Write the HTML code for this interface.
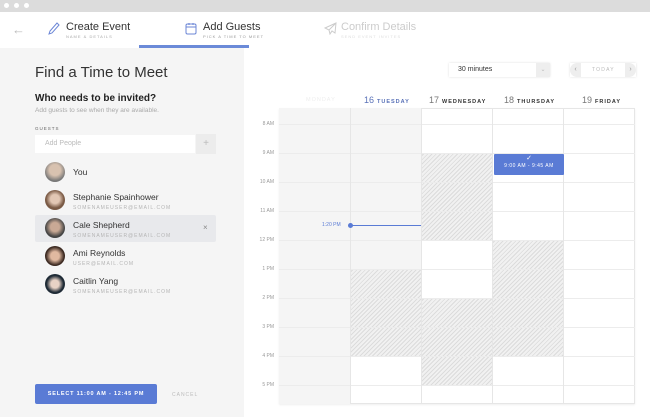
<!DOCTYPE html>
<html><head><meta charset="utf-8"><style>
*{margin:0;padding:0;box-sizing:border-box}
body{width:650px;height:417px;overflow:hidden;font-family:"Liberation Sans",sans-serif;background:#fff;position:relative}
.a{position:absolute}
.tiny{font-size:5px;letter-spacing:1px;color:#aaa;text-transform:uppercase}
.hr{position:absolute;left:279px;width:356px;height:1px;background:#ececec}
.tl{position:absolute;left:250px;width:24px;text-align:right;font-size:5px;color:#999}
.vl{position:absolute;top:108px;height:296px;width:1px;background:#e6e6e6}
.hatch{position:absolute;background:repeating-linear-gradient(135deg,#f1f1f1 0 2px,#dcdcdc 2px 3px)}
.av{position:absolute;left:45px;width:20px;height:20px;border-radius:50%}
.nm{position:absolute;left:73px;font-size:8.5px;color:#333}
.em{position:absolute;left:73px;font-size:5px;letter-spacing:1px;color:#b5b5b5}
.dh{position:absolute;top:95px;font-size:9px;color:#777}
.dh b{font-size:5.5px;letter-spacing:1px;color:#333;margin-left:3px}
</style></head><body>
<div class="a" style="left:0;top:0;width:650px;height:12px;background:#dcdcdc"></div>
<div class="a" style="left:4px;top:3px;width:5px;height:5px;border-radius:50%;background:#fff"></div>
<div class="a" style="left:14px;top:3px;width:5px;height:5px;border-radius:50%;background:#fff"></div>
<div class="a" style="left:24px;top:3px;width:5px;height:5px;border-radius:50%;background:#fff"></div>
<!-- header -->
<div class="a" style="left:12px;top:22px;font-size:13px;color:#bbb">&#8592;</div>
<svg class="a" style="left:48px;top:22px" width="12" height="14" viewBox="0 0 12 14"><path d="M9 1l2 2-7 8-3 1 1-3z" fill="none" stroke="#6b86d6" stroke-width="1"/></svg>
<div class="a" style="left:66px;top:21px;font-size:11px;color:#333">Create Event</div>
<div class="a tiny" style="left:66px;top:34px;font-size:4px">Name &amp; Details</div>
<svg class="a" style="left:185px;top:22px" width="12" height="13" viewBox="0 0 12 13"><rect x="1" y="2" width="10" height="10" rx="1.5" fill="none" stroke="#6b86d6"/><path d="M1 5h10M4 1v2M8 1v2" stroke="#6b86d6"/></svg>
<div class="a" style="left:203px;top:21px;font-size:11px;color:#333">Add Guests</div>
<div class="a tiny" style="left:203px;top:34px;font-size:4px;color:#999">Pick a time to meet</div>
<svg class="a" style="left:324px;top:22px" width="13" height="13" viewBox="0 0 13 13"><path d="M12 1L1 6l4 2 1 4 2-3 3 2z M5 8l7-7" fill="none" stroke="#ccc"/></svg>
<div class="a" style="left:341px;top:21px;font-size:11px;color:#ccc">Confirm Details</div>
<div class="a tiny" style="left:341px;top:34px;font-size:4px;color:#ddd">Send event invites</div>
<div class="a" style="left:139px;top:45px;width:110px;height:3px;background:#6b8ad8"></div>
<!-- left -->
<div class="a" style="left:0;top:48px;width:244px;height:369px;background:#f5f5f5"></div>
<div class="a" style="left:35px;top:64px;font-size:15px;color:#333">Find a Time to Meet</div>
<div class="a" style="left:35px;top:93px;font-size:10px;font-weight:bold;color:#222">Who needs to be invited?</div>
<div class="a" style="left:35px;top:107px;font-size:6.5px;color:#aaa">Add guests to see when they are available.</div>
<div class="a" style="left:35px;top:126px;font-size:4.5px;letter-spacing:1px;color:#666">GUESTS</div>
<div class="a" style="left:35px;top:135px;width:160px;height:18px;background:#fff"></div>
<div class="a" style="left:45px;top:140px;font-size:7px;color:#bbb">Add People</div>
<div class="a" style="left:196px;top:134px;width:20px;height:20px;background:#ececec;color:#bbb;font-size:10px;text-align:center;line-height:20px">+</div>
<div class="a" style="left:35px;top:215px;width:181px;height:27px;background:#e8e9ec;border-radius:2px"></div>
<div class="av" style="top:162px;background:radial-gradient(circle at 50% 40%,#d8c2b0 35%,#777 70%)"></div>
<div class="nm" style="top:167px">You</div>
<div class="av" style="top:190px;background:radial-gradient(circle at 50% 45%,#e2c7b4 30%,#7a5a45 60%)"></div>
<div class="nm" style="top:192px">Stephanie Spainhower</div><div class="em" style="top:205px">SOMENAMEUSER@EMAIL.COM</div>
<div class="av" style="top:218px;background:radial-gradient(circle at 50% 45%,#c9a995 30%,#444 65%)"></div>
<div class="nm" style="top:220px">Cale Shepherd</div><div class="em" style="top:233px">SOMENAMEUSER@EMAIL.COM</div>
<div class="a" style="left:203px;top:223px;font-size:8px;color:#888">×</div>
<div class="av" style="top:246px;background:radial-gradient(circle at 50% 50%,#e0b9a0 30%,#3a2820 65%)"></div>
<div class="nm" style="top:248px">Ami Reynolds</div><div class="em" style="top:261px">USER@EMAIL.COM</div>
<div class="av" style="top:274px;background:radial-gradient(circle at 50% 50%,#e8d2c5 28%,#1e2a35 60%)"></div>
<div class="nm" style="top:276px">Caitlin Yang</div><div class="em" style="top:289px">SOMENAMEUSER@EMAIL.COM</div>
<div class="a" style="left:35px;top:384px;width:122px;height:20px;background:#5a7bd5;border-radius:2px;color:#fff;font-size:5.5px;font-weight:bold;letter-spacing:.8px;text-align:center;line-height:20px">SELECT 11:00 AM - 12:45 PM</div>
<div class="a" style="left:172px;top:392px;font-size:5px;letter-spacing:1px;color:#bbb">CANCEL</div>
<!-- right controls -->
<div class="a" style="left:449px;top:63px;width:101px;height:14px;background:#fff;box-shadow:0 0 2px #ddd"></div>
<div class="a" style="left:458px;top:66px;font-size:7px;color:#333">30 minutes</div>
<div class="a" style="left:536px;top:63px;width:14px;height:14px;background:#eee;color:#bbb;font-size:6px;text-align:center;line-height:14px">&#8964;</div>
<div class="a" style="left:570px;top:63px;width:66px;height:14px;background:#fff;box-shadow:0 0 2px #ddd"></div>
<div class="a" style="left:570px;top:63px;width:11px;height:14px;background:#eee;border-radius:7px 0 0 7px;color:#999;font-size:7px;text-align:center;line-height:14px">‹</div>
<div class="a" style="left:625px;top:63px;width:11px;height:14px;background:#eee;border-radius:0 7px 7px 0;color:#999;font-size:7px;text-align:center;line-height:14px">›</div>
<div class="a" style="left:592px;top:67px;font-size:5px;letter-spacing:1.2px;color:#bbb">TODAY</div>
<!-- day headers -->
<div class="dh" style="left:306px;top:97px;font-size:5.5px;letter-spacing:1px;color:#eee">MONDAY</div>
<div class="dh" style="left:364px;color:#5a72b8">16<b style="color:#5a72b8">TUESDAY</b></div>
<div class="dh" style="left:429px">17<b>WEDNESDAY</b></div>
<div class="dh" style="left:504px">18<b>THURSDAY</b></div>
<div class="dh" style="left:582px">19<b>FRIDAY</b></div>
<!-- grid -->
<div class="a" style="left:279px;top:108px;width:356px;height:296px;border:1px solid #e6e6e6;box-shadow:0 1px 2px #eee"></div>
<div class="a" style="left:279px;top:108px;width:71px;height:296px;background:#f5f5f5"></div>
<div class="a" style="left:350px;top:108px;width:71px;height:161px;background:#f5f5f5"></div>
<div class="hatch" style="left:421px;top:153px;width:71px;height:87px"></div>
<div class="hatch" style="left:421px;top:298px;width:71px;height:87px"></div>
<div class="hatch" style="left:350px;top:269px;width:71px;height:87px"></div>
<div class="hatch" style="left:492px;top:240px;width:71px;height:116px"></div>
<div class="hr" style="top:124px"></div><div class="hr" style="top:153px"></div><div class="hr" style="top:182px"></div><div class="hr" style="top:211px"></div><div class="hr" style="top:240px"></div><div class="hr" style="top:269px"></div><div class="hr" style="top:298px"></div><div class="hr" style="top:327px"></div><div class="hr" style="top:356px"></div><div class="hr" style="top:385px"></div>
<div class="vl" style="left:350px"></div><div class="vl" style="left:421px"></div><div class="vl" style="left:492px"></div><div class="vl" style="left:563px"></div>
<div class="tl" style="top:121px">8 AM</div><div class="tl" style="top:150px">9 AM</div><div class="tl" style="top:179px">10 AM</div><div class="tl" style="top:208px">11 AM</div><div class="tl" style="top:237px">12 PM</div><div class="tl" style="top:266px">1 PM</div><div class="tl" style="top:295px">2 PM</div><div class="tl" style="top:324px">3 PM</div><div class="tl" style="top:353px">4 PM</div><div class="tl" style="top:382px">5 PM</div>
<div class="a" style="left:494px;top:154px;width:70px;height:21px;background:#5a7bd5;border-radius:1px;color:#fff;text-align:center"><div style="font-size:7px;line-height:9px">✓</div><div style="font-size:5px;letter-spacing:.5px">9:00 AM - 9:45 AM</div></div>
<div class="a" style="left:322px;top:222px;font-size:5px;color:#5a7bd5">1:20 PM</div>
<div class="a" style="left:348px;top:223px;width:5px;height:5px;border-radius:50%;background:#5a7bd5"></div>
<div class="a" style="left:350px;top:225px;width:71px;height:1px;background:#5a7bd5"></div>
</body></html>
